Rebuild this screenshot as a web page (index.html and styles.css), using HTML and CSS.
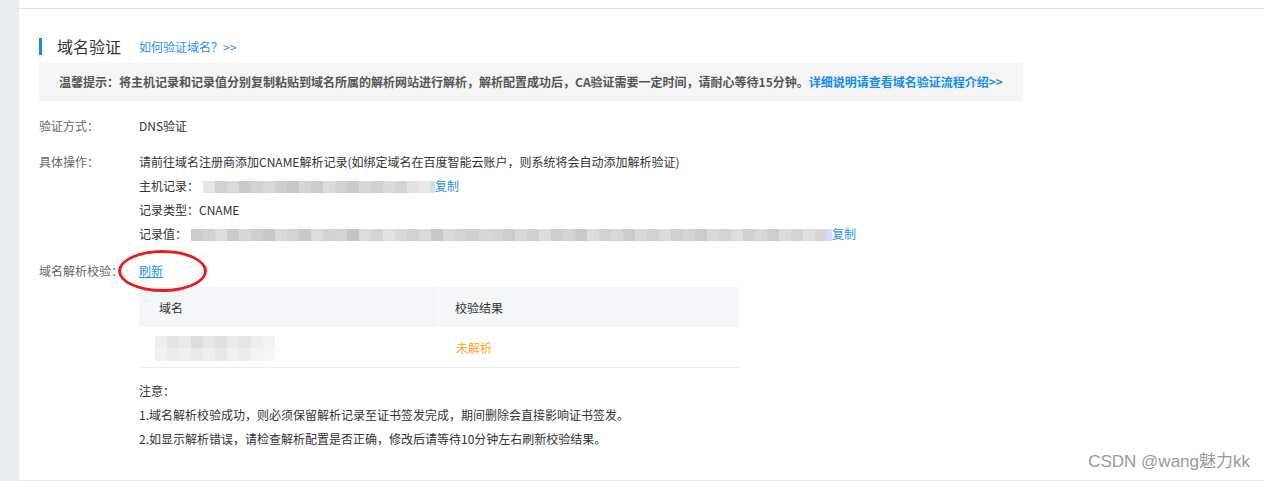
FILE: index.html
```html
<!DOCTYPE html>
<html lang="zh-CN">
<head>
<meta charset="utf-8">
<title>域名验证</title>
<link rel="stylesheet" href="styles.css">
</head>
<body>
<div class="layout">
  <aside class="sidebar"></aside>
  <main class="main">
    <section class="panel">
      <div class="title-row">
        <h2 class="title">域名验证</h2>
        <a class="help-link" href="#">如何验证域名？&gt;&gt;</a>
      </div>
      <div class="tip">温馨提示：将主机记录和记录值分别复制粘贴到域名所属的解析网站进行解析，解析配置成功后，CA验证需要一定时间，请耐心等待15分钟。<a class="tip-link" href="#">详细说明请查看域名验证流程介绍&gt;&gt;</a></div>

      <div class="row row-method">
        <div class="label">验证方式：</div>
        <div class="value">DNS验证</div>
      </div>

      <div class="row row-ops">
        <div class="label">具体操作：</div>
        <div class="value">
          <div class="line">请前往域名注册商添加CNAME解析记录(如绑定域名在百度智能云账户，则系统将会自动添加解析验证)</div>
          <div class="line">主机记录：<span class="mosaic mosaic-host"></span><a class="copy" href="#">复制</a></div>
          <div class="line">记录类型：CNAME</div>
          <div class="line">记录值：<span class="mosaic mosaic-value"></span><a class="copy" href="#">复制</a></div>
        </div>
      </div>

      <div class="row row-check">
        <div class="label">域名解析校验：</div>
        <div class="value">
          <span class="refresh-wrap"><a class="refresh" href="#">刷新</a><span class="ring"></span></span>
        </div>
      </div>

      <div class="table-wrap">
        <div class="table">
          <div class="thead">
            <div class="th th-domain">域名</div>
            <div class="th th-result">校验结果</div>
          </div>
          <div class="tr">
            <div class="td td-domain"><span class="mosaic-domain"></span></div>
            <div class="td td-result"><span class="status">未解析</span></div>
          </div>
        </div>
        <div class="notes">
          <div class="line">注意：</div>
          <div class="line">1.域名解析校验成功，则必须保留解析记录至证书签发完成，期间删除会直接影响证书签发。</div>
          <div class="line">2.如显示解析错误，请检查解析配置是否正确，修改后请等待10分钟左右刷新校验结果。</div>
        </div>
      </div>
    </section>
    <div class="watermark">CSDN @wang魅力kk</div>
  </main>
</div>
</body>
</html>
```

FILE: styles.css
```css
* { box-sizing: border-box; }
html, body { margin: 0; padding: 0; }
body {
  font-family: "Noto Sans CJK SC", "Microsoft YaHei", "Liberation Sans", sans-serif;
  font-size: 12px;
  color: #333;
  background: #fff;
}
a { text-decoration: none; }

.layout {
  display: flex;
  height: 481px;
}
.sidebar {
  width: 19px;
  flex: 0 0 19px;
  background: #e8ebf0;
}
.main {
  position: relative;
  flex: 1;
  padding-top: 8px;
}
.panel {
  border-top: 1px solid #e4e4e4;
  border-bottom: 1px solid #e8e8e8;
  height: 473px;
  padding: 25px 0 0 20px;
}

.title-row {
  display: flex;
  align-items: center;
  height: 24px;
}
.title {
  margin: 0;
  font-size: 16px;
  font-weight: normal;
  color: #333;
  line-height: 17px;
  border-left: 3px solid #108cee;
  padding-left: 15px;
  width: 100px;
}
.help-link {
  color: #2d8ff0;
  font-size: 12px;
}

.tip {
  margin-top: 5px;
  width: 984px;
  height: 38px;
  background: #f5f5f5;
  padding-left: 20px;
  line-height: 38px;
  font-weight: bold;
  color: #555;
  white-space: nowrap;
}
.tip-link { color: #108cee; }

.row {
  display: flex;
  line-height: 24px;
}
.label {
  width: 100px;
  flex: 0 0 100px;
  color: #666;
}
.value { color: #333; }
.row-method { margin-top: 13px; }
.row-ops { margin-top: 12px; }
.row-check { margin-top: 13px; }

.line {
  display: flex;
  align-items: center;
  height: 24px;
  white-space: nowrap;
}
.copy { color: #2d8ff0; }

.mosaic {
  display: inline-block;
  height: 12px;
  margin-top: 1px;
}
.mosaic-host {
  width: 236px;
  background: linear-gradient(to right,
    #ffffff 0 4px, #e8e6e3 4px 16px, #d2d0d2 16px 28px, #dcd9d8 28px 40px, #cdc8c6 40px 52px,
    #d4d2d4 52px 64px, #dad8da 64px 76px, #d0cdcd 76px 88px, #c9c6c6 88px 100px,
    #d6d4d6 100px 112px, #cecbcc 112px 124px, #dcdbdc 124px 136px, #d3d0d0 136px 148px,
    #cdcaca 148px 160px, #d8d6d8 160px 172px, #d1cfd0 172px 184px, #dbd9d9 184px 196px,
    #d5d3d4 196px 208px, #e2e1e2 208px 220px, #e9e8ea 220px 231px, #cfe0f4 231px 236px);
}
.mosaic-value {
  width: 645px;
  background: linear-gradient(to right,
    #ffffff 0 4px, #cccbcb 4px 16px, #d3d1d1 16px 28px, #dedddd 28px 40px, #cbcaca 40px 52px,
    #d9d8d8 52px 64px, #cfcece 64px 76px, #c8c8c8 76px 88px, #dbdada 88px 100px,
    #d3d3d3 100px 112px, #c9c8c6 112px 124px, #dcdcdc 124px 136px, #d0d2d4 136px 148px,
    #d5d2d2 148px 160px, #c6c6c4 160px 172px, #dcdcdc 172px 184px, #d4d4d4 184px 196px,
    #e2e2e2 196px 208px, #d9d8d8 208px 220px, #d1d1d1 220px 232px, #dcd9d9 232px 244px,
    #c9c8c8 244px 256px, #d8d9db 256px 268px, #d3d3d1 268px 280px, #cfcfcf 280px 292px,
    #d9d7d5 292px 304px, #d4d6d6 304px 316px, #cdcdcd 316px 328px, #dad9d9 328px 340px,
    #d0d0d0 340px 352px, #dcdcdc 352px 364px, #cecece 364px 376px, #d5d3d3 376px 388px,
    #c9c9c9 388px 400px, #dddddd 400px 412px, #d2d2d2 412px 424px, #d8d6d6 424px 436px,
    #cccccc 436px 448px, #d9d9d9 448px 460px, #d1d1d1 460px 472px, #dcdcdc 472px 484px,
    #cfcfcf 484px 496px, #d6d4d4 496px 508px, #cbcbcb 508px 520px, #dad9d9 520px 532px,
    #d3d3d3 532px 544px, #dddddd 544px 556px, #d0d0d0 556px 568px, #d8d8d8 568px 580px,
    #cdcdcd 580px 592px, #dbdbdb 592px 604px, #d4d4d4 604px 616px, #e0e0e0 616px 628px,
    #d6d6d6 628px 639px, #cfe0f4 639px 645px);
}

.refresh-wrap {
  position: relative;
  display: inline-block;
}
.refresh {
  color: #2d8ff0;
  text-decoration: underline;
}
.ring {
  position: absolute;
  left: -21px;
  top: -9px;
  width: 89px;
  height: 42px;
  border: 3px solid #ea1b1b;
  border-radius: 50%;
  pointer-events: none;
}

.table-wrap {
  margin-top: 4px;
  padding-left: 100px;
}
.table { width: 600px; }
.thead {
  display: flex;
  height: 40px;
  background: #f4f6f9;
}
.th {
  display: flex;
  align-items: center;
  color: #333;
}
.th-domain {
  width: 300px;
  padding-left: 20px;
  border-right: 1px solid #ffffff;
}
.th-result { padding-left: 16px; }
.tr {
  display: flex;
  height: 41px;
  border-bottom: 1px solid #e8eaf0;
}
.td {
  display: flex;
  align-items: center;
}
.td-domain {
  width: 300px;
  padding-left: 16px;
}
.td-result { padding-left: 17px; }
.mosaic-domain {
  display: inline-block;
  width: 120px;
  height: 25px;
  margin-top: 2px;
  background:
    linear-gradient(to right,
      #eeeeee 0 12px, #e4e4e4 12px 24px, #eaeaea 24px 36px, #dddcdc 36px 48px,
      #e6e6e6 48px 60px, #dfe0e0 60px 72px, #ebebeb 72px 84px, #e5e5e5 84px 96px,
      #eeeeee 96px 108px, #f2f2f2 108px 120px) top / 100% 12px no-repeat,
    linear-gradient(to right,
      #f2f2f2 0 12px, #ececec 12px 24px, #efefef 24px 36px, #e9e9e9 36px 48px,
      #eeeeee 48px 60px, #e7e7e7 60px 72px, #f0f0f0 72px 84px, #ececec 84px 96px,
      #f3f3f3 96px 108px, #f6f6f6 108px 120px) bottom / 100% 13px no-repeat;
}
.status { color: #f5a623; }

.notes {
  margin-top: 10px;
  color: #333;
}

.watermark {
  position: absolute;
  right: 14px;
  bottom: 9px;
  font-family: "Liberation Sans", "Noto Sans CJK SC", sans-serif;
  font-size: 17px;
  color: #9a9a9a;
  line-height: 20px;
}
```
